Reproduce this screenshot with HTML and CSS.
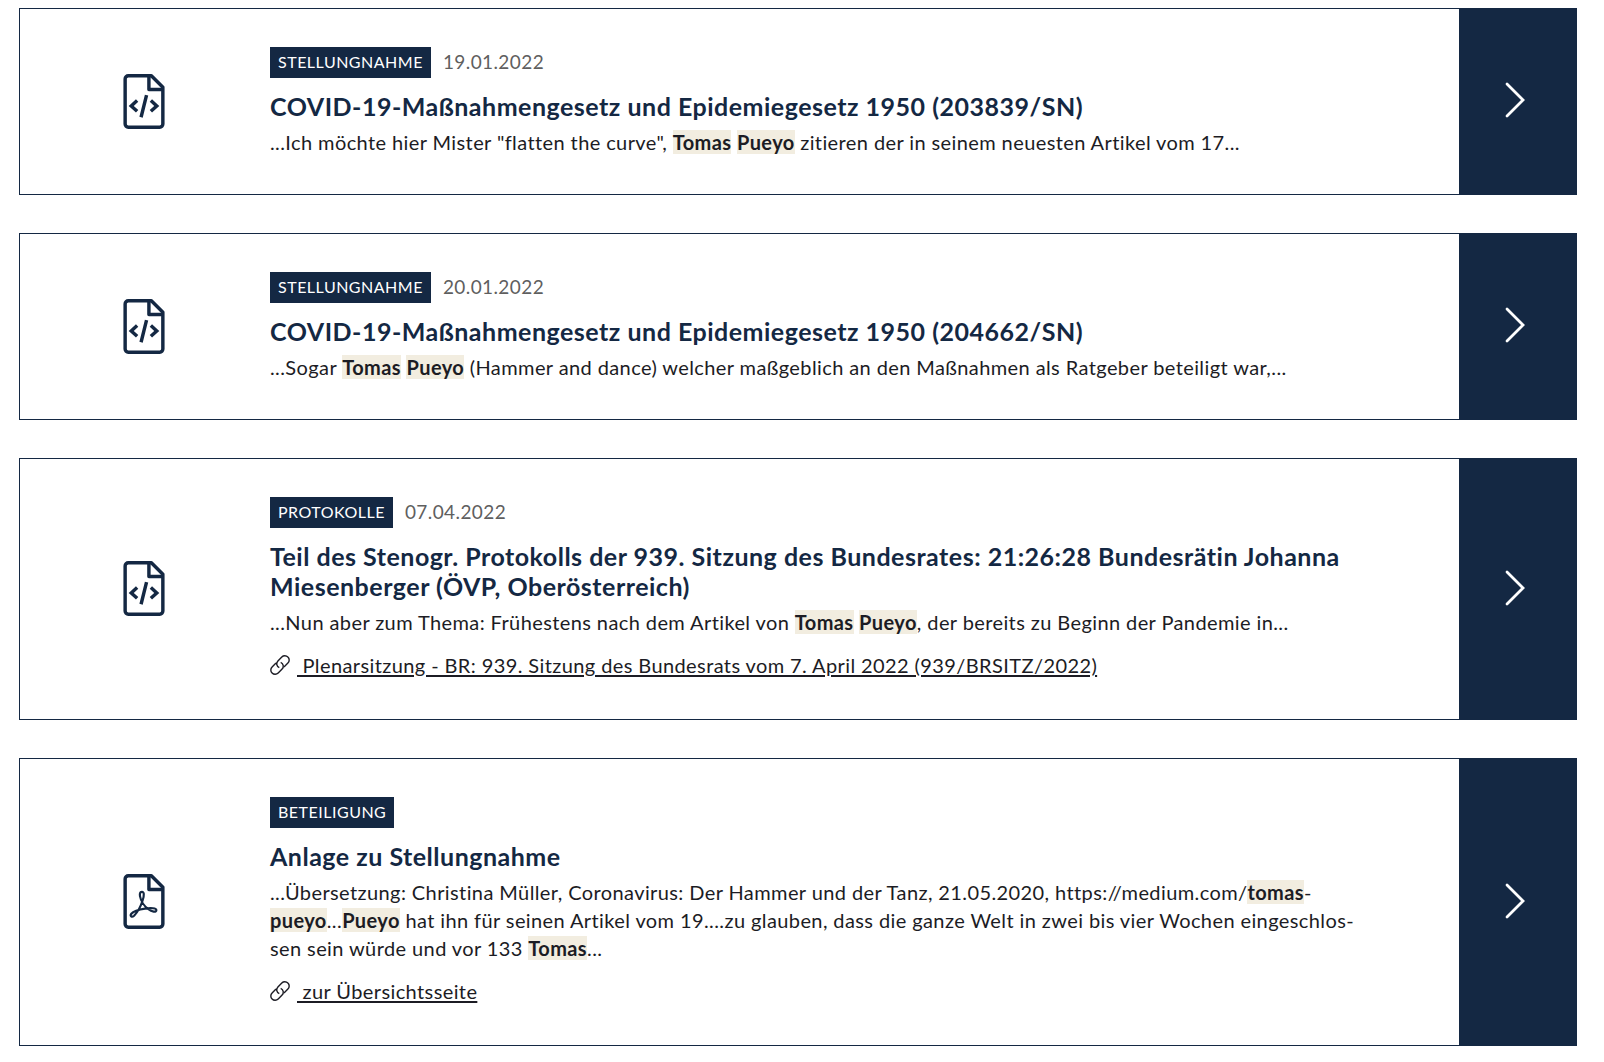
FILE: index.html
```
<!DOCTYPE html>
<html lang="de">
<head>
    <meta charset="UTF-8">
    <meta name="viewport" content="width=device-width, initial-scale=1.0">
    <title>Suchergebnisse</title>
    <link rel="stylesheet" href="styles.css">
</head>
<body>

    <!-- Icons -->
    <svg class="sprite" aria-hidden="true">
        <symbol id="icon-code" viewBox="0 0 42 56">
            <path d="M5 1.8h23.5L40.2 13.5V51a3.2 3.2 0 0 1-3.200 3.200H5A3.200 3.200 0 0 1 1.800 51V5A3.200 3.200 0 0 1 5 1.800z"/>
            <path d="M26 2v13.800h14"/>
            <path class="sharp" d="M14 27l-6 5.500 6 5.500M28 27l6 5.500-6 5.500M23.600 21.500l-5.600 22.500"/>
        </symbol>
        <symbol id="icon-pdf" viewBox="0 0 42 56">
            <path d="M5 1.8h23.5L40.2 13.5V51a3.2 3.2 0 0 1-3.200 3.200H5A3.200 3.200 0 0 1 1.800 51V5A3.200 3.200 0 0 1 5 1.800z"/>
            <path d="M26 2v13.800h14"/>
            <path class="thin" d="M18.500 18.200c2.600-.6 3.200 3 .9 9.300-2 6-6 12.500-8.500 15-2.400 2-4.500.2-2.800-2 2-2.500 8-4.500 14-5.300 6-.9 11.500-.6 11.500 1.600 0 2.500-4.500 1.800-8.500-1.200-4-3-7.500-8.800-8.200-13-.4-2.700.3-4.200 1.600-4.400z"/>
        </symbol>
        <symbol id="icon-link" viewBox="0 0 20 20">
            <path d="M9.300 12.700a4.200 4.200 0 0 1-1.400-6.800l3.900-3.900a4.250 4.250 0 0 1 6.100 0 4.250 4.250 0 0 1 0 6.100l-3.900 3.900"/>
            <path d="M10.700 7.300a4.200 4.200 0 0 1 1.400 6.800l-3.900 3.900a4.250 4.250 0 0 1-6.100 0 4.250 4.250 0 0 1 0-6.100l3.900-3.900"/>
        </symbol>
        <symbol id="icon-arrow" viewBox="0 0 20 36">
            <path d="M2 2L18 18 2 34"/>
        </symbol>
    </svg>

    <main class="results">
        <article class="card">
            <div class="card-icon"><svg class="file"><use href="#icon-code"/></svg></div>
            <div class="card-body">
                <div class="meta"><span class="badge">STELLUNGNAHME</span><time datetime="2022-01-19">19.01.2022</time></div>
                <h2>COVID-19-Maßnahmengesetz und Epidemiegesetz 1950 (203839/SN)</h2>
                <p>...Ich möchte hier Mister "flatten the curve", <mark>Tomas</mark> <mark>Pueyo</mark> zitieren der in seinem neuesten Artikel vom 17...</p>
            </div>
            <a class="card-arrow" href="#" aria-label="Öffnen"><svg><use href="#icon-arrow"/></svg></a>
        </article>

        <article class="card">
            <div class="card-icon"><svg class="file"><use href="#icon-code"/></svg></div>
            <div class="card-body">
                <div class="meta"><span class="badge">STELLUNGNAHME</span><time datetime="2022-01-20">20.01.2022</time></div>
                <h2>COVID-19-Maßnahmengesetz und Epidemiegesetz 1950 (204662/SN)</h2>
                <p>...Sogar <mark>Tomas</mark> <mark>Pueyo</mark> (Hammer and dance) welcher maßgeblich an den Maßnahmen als Ratgeber beteiligt war,...</p>
            </div>
            <a class="card-arrow" href="#" aria-label="Öffnen"><svg><use href="#icon-arrow"/></svg></a>
        </article>

        <article class="card">
            <div class="card-icon"><svg class="file"><use href="#icon-code"/></svg></div>
            <div class="card-body">
                <div class="meta"><span class="badge">PROTOKOLLE</span><time datetime="2022-04-07">07.04.2022</time></div>
                <h2>Teil des Stenogr. Protokolls der 939. Sitzung des Bundesrates: 21:26:28 Bundesrätin Johanna Miesenberger (ÖVP, Oberösterreich)</h2>
                <p>...Nun aber zum Thema: Frühestens nach dem Artikel von <mark>Tomas</mark> <mark>Pueyo</mark>, der bereits zu Beginn der Pandemie in...</p>
                <div class="source"><svg><use href="#icon-link"/></svg><a href="#">&nbsp;Plenarsitzung - BR: 939. Sitzung des Bundesrats vom 7. April 2022 (939/BRSITZ/2022)</a></div>
            </div>
            <a class="card-arrow" href="#" aria-label="Öffnen"><svg><use href="#icon-arrow"/></svg></a>
        </article>

        <article class="card">
            <div class="card-icon"><svg class="file"><use href="#icon-pdf"/></svg></div>
            <div class="card-body">
                <div class="meta"><span class="badge">BETEILIGUNG</span></div>
                <h2>Anlage zu Stellungnahme</h2>
                <p>...Übersetzung: Christina Müller, Coronavirus: Der Hammer und der Tanz, 21.05.2020, https://medium.com/<mark>tomas</mark>-<wbr><mark>pueyo</mark>...<mark>Pueyo</mark> hat ihn für seinen Artikel vom 19....zu glauben, dass die ganze Welt in zwei bis vier Wochen eingeschlos&shy;sen sein würde und vor 133 <mark>Tomas</mark>...</p>
                <div class="source"><svg><use href="#icon-link"/></svg><a href="#">&nbsp;zur Übersichtsseite</a></div>
            </div>
            <a class="card-arrow" href="#" aria-label="Öffnen"><svg><use href="#icon-arrow"/></svg></a>
        </article>
    </main>

</body>
</html>
```
FILE: styles.css
```
* {
    box-sizing: border-box;
}

body {
    margin: 0;
    font-family: Lato, "Open Sans", sans-serif;
    font-size: 20px;
    line-height: 28px;
    letter-spacing: 0.4px;
    color: #1c1c24;
    background: #fff;
}

svg {
    display: block;
    fill: none;
    stroke: currentColor;
}

.sprite {
    display: none;
}

.results {
    display: flex;
    flex-direction: column;
    gap: 38px;
    padding: 8px 27px 16px 19px;
}

.card {
    display: flex;
    border: 1px solid #142843;
}

.card-icon {
    flex: 0 0 250px;
    display: flex;
    align-items: center;
    justify-content: center;
    padding: 0 2px 1px 0;
    color: #142843;
}

.file {
    width: 42px;
    height: 55px;
    stroke-width: 3.5;
    stroke-linejoin: round;
}

.sharp {
    stroke-linejoin: miter;
}

.thin {
    stroke-width: 2.2;
}

.card-body {
    flex: 1;
    min-width: 0;
    padding: 38px 98px 38px 0;
}

/* Typ und Datum */
.meta {
    display: flex;
    gap: 12px;
    font-size: 19px;
    line-height: 29px;
    color: #5f5f5f;
}

.badge {
    padding: 0 8px 2px;
    font-size: 16px;
    letter-spacing: 0.5px;
    color: #fff;
    background: #142843;
}

h2 {
    margin: 13px 0 7px;
    font-size: 25px;
    line-height: 30px;
    font-weight: 700;
    letter-spacing: 0.5px;
    color: #142843;
}

p {
    margin: 0;
}

mark {
    font-weight: 700;
    color: inherit;
    background: #f2ede0;
}

.source {
    display: flex;
    align-items: center;
    gap: 7px;
    margin: 15px 0 2px;
}

.source svg {
    width: 20px;
    height: 20px;
    stroke-width: 1.4;
}

.source a {
    color: inherit;
    text-decoration-thickness: 2px;
    text-underline-offset: 2px;
}

.card-arrow {
    flex: 0 0 117px;
    display: flex;
    align-items: center;
    justify-content: center;
    padding: 0 6px 3px 0;
    color: #fff;
    background: #142843;
}

.card-arrow svg {
    width: 20px;
    height: 36px;
    stroke-width: 2.8;
    stroke-linecap: round;
}
```
